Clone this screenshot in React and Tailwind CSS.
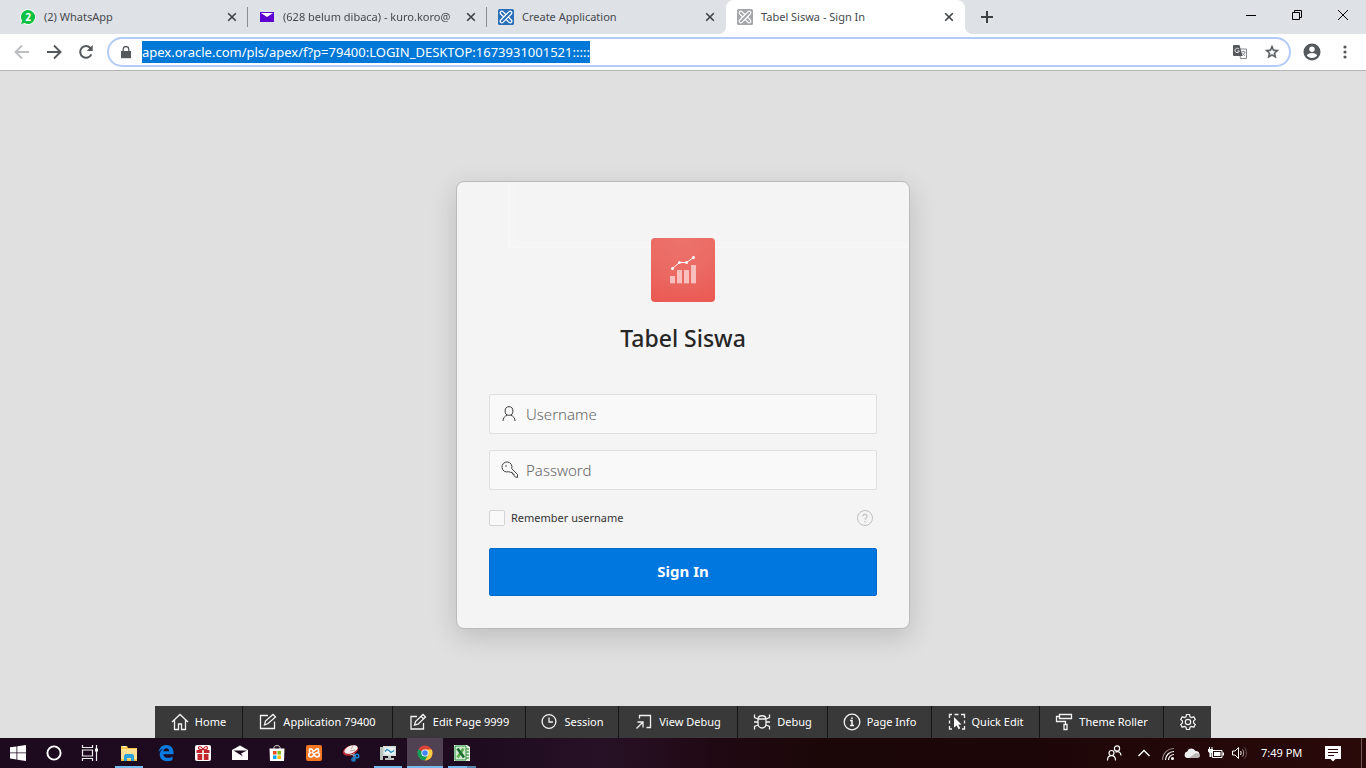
import React from "react";

const CloseIcon = () => (
  <svg width="10" height="10" viewBox="0 0 10 10" stroke="#3c4043" strokeWidth="1.600" aria-hidden="true">
    <path d="M1.200 1.200l7.600 7.600M8.800 1.200L1.200 8.800" />
  </svg>
);

const WhatsAppFavicon = () => (
  <svg width="16" height="16" viewBox="0 0 16 16" aria-hidden="true">
    <circle cx="8" cy="8" r="8" fill="#f4fbf5" />
    <path d="M8 1a7 7 0 1 1-3.4 13.100L1.200 15l.9-3.300A7 7 0 0 1 8 1z" fill="#0dc143" />
    <text x="8" y="11.500" textAnchor="middle" fontSize="10" fontWeight="700" fill="#fff" fontFamily="Open Sans, sans-serif">2</text>
  </svg>
);

const MailFavicon = () => (
  <svg width="16" height="16" viewBox="0 0 16 16" aria-hidden="true">
    <path d="M1 3h14v10H1z" fill="#5f01d1" />
    <path d="M2 4h12L8 8z" fill="#fff" />
  </svg>
);

const ApexFavicon = ({ color }) => (
  <svg width="16" height="16" viewBox="0 0 16 16" aria-hidden="true">
    <rect width="16" height="16" rx="1.500" fill={color} />
    <g transform="rotate(45 8 8)" fill="none" stroke="#fff" strokeWidth="1.200">
      <rect x="6.400" y="0.500" width="3.200" height="15" rx="1.600" />
      <path d="M6.400 6.400H2.100a1.600 1.600 0 0 0 0 3.200h4.300M9.600 6.400h4.300a1.600 1.600 0 0 1 0 3.200H9.600" />
    </g>
  </svg>
);

const tabs = [
  { title: "(2) WhatsApp", icon: <WhatsAppFavicon /> },
  { title: "(628 belum dibaca) - kuro.koro@", icon: <MailFavicon />, faded: true },
  { title: "Create Application", icon: <ApexFavicon color="#2b6fb8" />, last: true },
  { title: "Tabel Siswa - Sign In", icon: <ApexFavicon color="#a4a7aa" />, active: true },
];

function Tab({ title, icon, active, last, faded }) {
  return (
    <div
      className={
        "relative flex h-full w-[239px] min-w-0 items-center pl-[11px] " + (active ? "rounded-t-lg bg-white" : "")
      }
    >
      {icon}
      <button
        type="button"
        className={
          "ml-2 h-5 min-w-0 flex-1 text-left text-[11px] leading-5 whitespace-nowrap text-[#45494d] " +
          (faded ? "[mask-image:linear-gradient(to_right,black_91%,transparent_104%)]" : "")
        }
      >
        {title}
      </button>
      <button type="button" aria-label="Close tab" className="mr-2 flex h-4 w-4 items-center justify-center">
        <CloseIcon />
      </button>
      {!active && !last && <span className="absolute top-[7px] right-0 h-5 w-px bg-[#8a8d91]" />}
      {active && (
        <>
          <span className="absolute bottom-0 -left-2 h-2 w-2 bg-[radial-gradient(circle_at_0_0,#dee1e6_8px,#fff_8px)]" />
          <span className="absolute -right-2 bottom-0 h-2 w-2 bg-[radial-gradient(circle_at_100%_0,#dee1e6_8px,#fff_8px)]" />
        </>
      )}
    </div>
  );
}

function BrowserBar() {
  return (
    <header>
      <div className="flex h-[34px] items-stretch bg-[#dee1e6] pl-[9px]">
        {tabs.map((t) => (
          <Tab key={t.title} {...t} />
        ))}
        <button type="button" aria-label="New tab" className="ml-3 flex w-5 items-center justify-center">
          <svg width="12" height="12" viewBox="0 0 12 12" stroke="#3c4043" strokeWidth="2">
            <path d="M6 0v12M0 6h12" />
          </svg>
        </button>
        <div className="ml-auto flex h-[29px]">
          <button type="button" aria-label="Minimize" className="flex w-[46px] items-center justify-center">
            <svg width="10" height="10" viewBox="0 0 10 10"><path d="M0 5h10v1H0z" /></svg>
          </button>
          <button type="button" aria-label="Restore" className="flex w-[46px] items-center justify-center">
            <svg width="10" height="10" viewBox="0 0 10 10" fill="none" stroke="#000">
              <path d="M.5 2.500h7v7h-7zM2.500 2.500v-2h7v7h-2" />
            </svg>
          </button>
          <button type="button" aria-label="Close" className="flex w-[46px] items-center justify-center">
            <svg width="10" height="10" viewBox="0 0 10 10" fill="none" stroke="#000">
              <path d="M0 0l10 10M10 0L0 10" />
            </svg>
          </button>
        </div>
      </div>

      <div className="flex h-[37px] items-center border-b border-[#b4b4b4] bg-white pl-[14px]">
        <button type="button" aria-label="Back" className="flex w-4 justify-center">
          <svg width="16" height="16" viewBox="0 0 16 16" fill="none" stroke="#bbbdc0" strokeWidth="1.900">
            <path d="M15 8H2M8 1.500L1.500 8 8 14.500" />
          </svg>
        </button>
        <button type="button" aria-label="Forward" className="ml-4 flex w-4 justify-center">
          <svg width="16" height="16" viewBox="0 0 16 16" fill="none" stroke="#55595e" strokeWidth="1.900">
            <path d="M1 8h13M8 1.500L14.500 8 8 14.500" />
          </svg>
        </button>
        <button type="button" aria-label="Reload" className="ml-4 flex w-4 justify-center">
          <svg width="16" height="16" viewBox="0 0 16 16" fill="none" stroke="#55595e" strokeWidth="2">
            <path d="M13.300 10.300A5.800 5.800 0 1 1 12.300 4L13 4.900" />
            <path d="M14.700 1v6H8.700z" fill="#55595e" stroke="none" />
          </svg>
        </button>
        <div className="ml-[13px] flex h-[30px] flex-1 items-center rounded-full border-2 border-[#b3cbf9] pr-[9px] pl-[12px]">
          <svg width="10" height="13" viewBox="0 0 10 13" aria-hidden="true">
            <path d="M0 5h10v7.200H0z" fill="#55595e" />
            <path d="M2.200 5.500V3.300a2.800 2.800 0 0 1 5.600 0v2.200" fill="none" stroke="#55595e" strokeWidth="1.300" />
          </svg>
          <input
            aria-label="Address"
            defaultValue="apex.oracle.com/pls/apex/f?p=79400:LOGIN_DESKTOP:1673931001521:::::"
            className="ml-[11px] h-[22px] bg-[#0078d7] text-[13px] text-white outline-none field-sizing-content"
          />
          <button type="button" aria-label="Translate" className="ml-auto flex w-4 justify-center">
            <svg width="14" height="14" viewBox="0 0 14 14">
              <path d="M6 4h7.500v9.500H7.500z" fill="#fff" stroke="#85888c" />
              <path d="M1 0h5.500L9.500 11H1a1 1 0 0 1-1-1V1a1 1 0 0 1 1-1z" fill="#55595e" />
              <path d="M6 4.200A2.200 2.200 0 1 0 6.300 6H4.300" fill="none" stroke="#e8eaed" />
              <path d="M8.500 6.800h4M10.500 5.800v1M12 7c-.4 1.700-1.500 2.800-2.700 3.500M9.500 8c.5 1.300 1.400 2.200 2.500 2.800" fill="none" stroke="#85888c" strokeWidth=".9" />
            </svg>
          </button>
          <button type="button" aria-label="Bookmark" className="ml-[15px] flex w-[17px] justify-center">
            <svg width="16" height="16" viewBox="0 0 24 24" fill="#55595e">
              <path d="M22 9.240l-7.190-.62L12 2 9.190 8.630 2 9.240l5.460 4.730L5.820 21 12 17.270 18.180 21l-1.630-7.030L22 9.240zM12 15.400l-3.760 2.270 1-4.280-3.320-2.880 4.380-.38L12 6.100l1.710 4.040 4.380.38-3.320 2.880 1 4.280L12 15.400z" stroke="#55595e" strokeWidth=".8" />
            </svg>
          </button>
        </div>
        <button type="button" aria-label="Profile" className="ml-3 flex w-[18px] justify-center">
          <svg width="18" height="18" viewBox="0 0 18 18">
            <circle cx="9" cy="9" r="8.500" fill="#55595e" />
            <circle cx="9" cy="6.300" r="2.700" fill="#fff" />
            <path d="M3.800 12.200c1.200-1.500 3.200-2.200 5.200-2.200s4 .7 5.200 2.200C13 14 11.100 15 9 15s-4-1-5.200-2.800z" fill="#fff" />
          </svg>
        </button>
        <button type="button" aria-label="Menu" className="mr-[13px] ml-4 flex w-4 justify-center">
          <svg width="4" height="14" viewBox="0 0 4 14" fill="#55595e">
            <circle cx="2" cy="2" r="1.600" /><circle cx="2" cy="7" r="1.600" /><circle cx="2" cy="12" r="1.600" />
          </svg>
        </button>
      </div>
    </header>
  );
}

function LoginCard() {
  return (
    <section className="relative w-full max-w-[454px] rounded-lg border border-[#bbb] bg-[#f4f4f4] px-8 pt-14 pb-8 shadow-[0_8px_28px_rgba(0,0,0,0.16)]">
      <span className="pointer-events-none absolute top-0 right-0 left-[51px] h-[66px] border-b-2 border-l-2 border-[#f7f7f7] shadow-[inset_6px_-5px_0_#f5f5f5]" />
      <div className="relative mx-auto flex h-16 w-16 items-center justify-center rounded bg-[radial-gradient(circle_at_50%_0,#ec736c_0%,#eb6a64_50%,#ea5851_100%)]">
        <svg width="32" height="32" viewBox="0 0 32 32" aria-hidden="true">
          <path d="M3 23h5v7H3zM10 17h5v13h-5zM17 17h5v13h-5zM24 12h5v18h-5z" fill="#b33a35" opacity=".45" />
          <path d="M3 22h5v7.500H3zM10 16h5v13.500h-5zM17 16h5v13.500h-5zM24 11h5v18.500h-5z" fill="#f8bfbc" />
          <path d="M5.500 14.500l7-6h7l7-5" fill="none" stroke="#fff" />
          <g fill="#fff">
            <circle cx="5.500" cy="14.500" r="1.500" /><circle cx="12.500" cy="8.500" r="1.500" />
            <circle cx="19.500" cy="8.500" r="1.500" /><circle cx="26.500" cy="3.500" r="1.500" />
          </g>
        </svg>
      </div>
      <h1 className="mt-5 text-center text-[23px] leading-8 font-medium text-[#262626]">Tabel Siswa</h1>
      <form className="mt-10 flex flex-col" onSubmit={(e) => e.preventDefault()}>
        <label className="flex h-10 items-center rounded-xs border border-[#dfdfdf] bg-[#f9f9f9] pl-[11px]">
          <svg width="16" height="16" viewBox="0 0 16 16" fill="none" stroke="#404040" aria-hidden="true">
            <ellipse cx="8" cy="5" rx="3.900" ry="4.300" />
            <path d="M2 15c0-3 1.600-4.800 4.200-5.800M14 15c0-3-1.600-4.800-4.200-5.800" />
          </svg>
          <input aria-label="Username" placeholder="Username" className="ml-[9px] h-full min-w-0 flex-1 text-[15px] font-light outline-none placeholder:text-[#666]" />
        </label>
        <label className="mt-4 flex h-10 items-center rounded-xs border border-[#dfdfdf] bg-[#f9f9f9] pl-[11px]">
          <svg width="17" height="17" viewBox="0 0 17 17" fill="none" stroke="#404040" aria-hidden="true">
            <path d="M10.700 7.600a5 5 0 1 0-3.100 3.100l1.900.6 1.700.2.300 1.600 1.500.1.200 1.600 1.200 1.300 2.100.3v-3z" />
            <circle cx="5" cy="5" r=".8" fill="#404040" stroke="none" />
          </svg>
          <input aria-label="Password" type="password" placeholder="Password" className="ml-2 h-full min-w-0 flex-1 text-[15px] font-light outline-none placeholder:text-[#666]" />
        </label>
        <div className="mt-5 flex h-4 items-center">
          <input id="remember" type="checkbox" className="h-4 w-4 appearance-none rounded-xs border border-[#d4d4d4] bg-[#f9f9f9] checked:bg-[#0076df]" />
          <label htmlFor="remember" className="ml-[6px] text-[11px] leading-4 text-[#333]">Remember username</label>
          <button type="button" aria-label="Help" className="mr-1 ml-auto">
            <svg width="16" height="16" viewBox="0 0 16 16" fill="none" stroke="#bfbfbf">
              <circle cx="8" cy="8" r="7.500" />
              <path d="M5.900 6.300a2.100 2.100 0 1 1 3.300 1.700C8.400 8.500 8 8.800 8 9.800" strokeWidth="1.200" />
              <circle cx="8" cy="11.800" r=".8" fill="#bfbfbf" stroke="none" />
            </svg>
          </button>
        </div>
        <button type="submit" className="mt-[22px] h-12 rounded-xs border border-[#006acb] bg-[#0076df] text-[15px] font-bold text-white">
          Sign In
        </button>
      </form>
    </section>
  );
}

const Ico = ({ children }) => (
  <svg width="18" height="18" viewBox="0 0 18 18" fill="none" stroke="#f2f2f2" strokeWidth="1.300" className="shrink-0" aria-hidden="true">
    {children}
  </svg>
);

const devItems = [
  { label: "Home", cls: "w-[88px]", icon: <Ico><path d="M1 9l8-7.500L17 9M3.500 7v9.500h4V11h3v5.500h4V7" /></Ico> },
  { label: "Application 79400", cls: "w-[150px]", icon: <Ico><path d="M9 2.500H1.500v13h14V8.500M5.500 12l1-4L14 1.500 16.500 4 9 10.500z" /></Ico> },
  { label: "Edit Page 9999", cls: "w-[133px]", icon: <Ico><path d="M8 3.500H2v12.500h12.500V10M5.500 12l1-3.500 7.500-7 2.500 2.500-7.500 7.200zM12 3.300l2.500 2.500" /></Ico> },
  { label: "Session", cls: "w-[93px]", icon: <Ico><circle cx="9" cy="8.500" r="6.900" /><path d="M9 4.500v4.500h4" /></Ico> },
  { label: "View Debug", cls: "w-[119px]", icon: <Ico><path d="M4.500 5.500V2.500h11v12h-4M1.500 15.500l6-6M2.500 9h5.500v5.500" /></Ico> },
  { label: "Debug", cls: "w-[90px]", icon: <Ico><path d="M5 6.500c0-5 8-5 8 0v4c0 6-8 6-8 0zM5 6h8M1.500 1.500v3L5 6M16.500 1.500v3L13 6M1 9h4M13 9h4M5 12l-3.500 1.500v3M13 12l3.500 1.500v3" /></Ico> },
  { label: "Page Info", cls: "w-[104px]", icon: <Ico><circle cx="9" cy="9" r="7.800" /><path d="M7 7.500h2v5M7 12.500h4M9 4.500v1.500" strokeWidth="1.600" /></Ico> },
  { label: "Quick Edit", cls: "w-[108px]", icon: <Ico><path d="M1.500 5V1.500H4M6.500 1.500h4M13 1.500h3.500V5M16.500 7.500v3M16.500 13v3H14M1.500 7.500v3M1.500 13v3H4" /><path d="M6 4l7.500 7.500-3.200.2 2 3.600-1.700.9-1.900-3.700L6 14.500z" fill="#fff" stroke="none" /></Ico> },
  { label: "Theme Roller", cls: "w-[124px]", icon: <Ico><path d="M4.500 1.500h12v4h-12zM4.500 3.500h-3v5h9v2.500M9 11.500h3v5H9z" /></Ico> },
];

function DeveloperToolbar() {
  return (
    <nav className="absolute inset-x-0 bottom-0 flex h-8 justify-center text-[11px] text-white">
      {devItems.map((d) => (
        <button key={d.label} type="button" className={"flex items-center justify-center gap-[6px] border-r border-[#151515] bg-[#393939] whitespace-nowrap " + d.cls}>
          {d.icon}
          {d.label}
        </button>
      ))}
      <button type="button" aria-label="Settings" className="flex w-[47px] items-center justify-center bg-[#393939]">
        <svg width="18" height="18" viewBox="0 0 24 24" fill="none" stroke="#f2f2f2" strokeWidth="1.600">
          <path d="M10 2h4l.7 3 2 1.100 3-1 2 3.500-2.300 2.100v2.600l2.300 2.100-2 3.500-3-1-2 1.100L14 22h-4l-.7-3-2-1.100-3 1-2-3.500 2.300-2.100v-2.600L2.300 8.600l2-3.500 3 1 2-1.100z" />
          <circle cx="12" cy="12" r="3.600" />
        </svg>
      </button>
    </nav>
  );
}

const S = ({ children, w = 18, h = 18 }) => (
  <svg width={w} height={h} viewBox={"0 0 " + w + " " + h} fill="none" aria-hidden="true">{children}</svg>
);

const systemApps = [
  { name: "Start", icon: <S w={16} h={16}><path d="M0 2.300l6.500-.9v6H0zM7.300 1.200L16 0v7.400H7.300zM0 8.300h6.500v6.200L0 13.600zM7.300 8.300H16V16l-8.700-1.200z" fill="#fff" /></S> },
  { name: "Cortana", icon: <S><circle cx="9" cy="9" r="6.600" stroke="#fff" strokeWidth="1.900" /></S> },
  { name: "Task View", icon: <S><path d="M1.500 1v2.500h10V1M1.500 17v-2.500h10V17M1.500 6h10v6h-10zM15.500 1v16" stroke="#eee" strokeWidth="1.200" /><path d="M14 4.500h3v3h-3z" fill="#fff" /></S> },
];

const apps = [
  { name: "File Explorer", line: "mx-1 bg-[#76b9ed]", icon: <S><path d="M1 2h6l1 2h9v13H1z" fill="#f9c84a" /><path d="M1 5h16v10H1z" fill="#ffe293" /><path d="M4 17v-5.500L5.500 10h7l1.500 1.500V17h-3v-3H7v3z" fill="#2aa2dc" /><path d="M3 2.500h3" stroke="#fff" /></S> },
  { name: "Edge", icon: <S><path d="M1.500 8.500C2 4 5 1 9.300 1c4.500 0 7.200 3.200 7.200 7.200v2H6.300c.2 2.500 2.300 3.600 4.700 3.600 1.800 0 3.200-.5 4.500-1.300v3.500c-1.500.8-3.200 1.200-5.200 1.200-4.500 0-7.600-2.500-7.600-6.700 0-2.700 1.400-4.800 3.600-5.800-2.200.3-3.800 1.700-4.800 3.800zM6.400 7.200h5.700c0-1.700-.9-2.900-2.700-2.900-1.600 0-2.700 1.200-3 2.900z" fill="#0a7be0" /></S> },
  { name: "Gifts", icon: <S><rect x="1" y="1" width="16" height="16" rx="2" fill="#fff" /><path d="M2.500 6h5.700v3H2.500zM9.800 6h5.700v3H9.800zM3.500 10h4.700v6H3.500zM9.800 10h4.700v6H9.800z" fill="#c3252c" /><path d="M9 5.500C7 1.500 4.500 2 4.500 4S7 5.500 9 5.500zm0 0c2-4 4.500-3.500 4.500-1.500S11 5.500 9 5.500z" stroke="#c3252c" strokeWidth="1.200" /></S> },
  { name: "Mail", icon: <S><path d="M1 6l8-4.500L17 6v10H1z" fill="#fff" /><path d="M2.500 6.500h13.500L10 9.500l2 3z" fill="#1d0b1e" /></S> },
  { name: "Store", icon: <S><path d="M6 5V3.500C6 1 12 1 12 3.500V5" stroke="#ddd" /><path d="M1.500 4.500h15L16 17H2z" fill="#fff" /><path d="M5 7h3.500v3.500H5z" fill="#f25022" /><path d="M9.500 7H13v3.500H9.500z" fill="#7fba00" /><path d="M5 11.500h3.500V15H5z" fill="#00a4ef" /><path d="M9.500 11.500H13V15H9.500z" fill="#ffb900" /></S> },
  { name: "XAMPP", icon: <S><rect x="1" y="1" width="16" height="16" rx="2" fill="#f37622" /><path d="M4 5h2.500L9 7.500M14 5h-2.500L6.500 9M6 9c-3 0-3 4 0 4 2.500 0 3.500-4.500 6-4.500 3.500 0 3 4.500 0 4.500-2 0-3-2-4-4M4.500 5v3.500M13.500 5v3" stroke="#fff" strokeWidth="1.600" /></S> },
  { name: "Snipping Tool", icon: <S><ellipse cx="8.500" cy="6.500" rx="8" ry="4.800" fill="#b72a33" transform="rotate(-22 8.500 6.500)" /><ellipse cx="9" cy="5.500" rx="7" ry="3.700" fill="#f4eeee" transform="rotate(-22 9 5.500)" /><path d="M9 5l2-3M8 7l5-1" stroke="#a88" strokeWidth=".7" /><path d="M8 10l6 2M12 9v7" stroke="#bbb" /><circle cx="15" cy="12" r="1.800" stroke="#1686d9" strokeWidth="1.500" /><circle cx="11.500" cy="15.500" r="1.600" stroke="#1686d9" strokeWidth="1.500" /></S> },
  { name: "System Monitor", line: "mx-1 bg-[#76b9ed]", icon: <S><path d="M1 3h3v13H1z" fill="#b8c4bd" /><path d="M4 2h13v10H4z" fill="#d6dad8" /><path d="M5.500 3.500h10v7h-10z" fill="#e9f6fb" /><path d="M6 7.500l2-2 2 1 2 2 3-2" stroke="#2585c4" strokeWidth="1.200" /><path d="M9 12h3v2h3v2H6v-2h3z" fill="#bfc6c2" /></S> },
  { name: "Chrome", active: true, line: "bg-[#76b9ed]", icon: <S><circle cx="9" cy="9" r="7.500" fill="#db4437" /><path d="M9 9L2.500 5.250A7.500 7.500 0 0 0 9 16.500l3.250-5.600z" fill="#0f9d58" /><path d="M9 5.600h6.700A7.500 7.500 0 0 1 9 16.500l3.100-5.600z" fill="#ffcd40" /><circle cx="9" cy="9" r="3.600" fill="#fff" /><circle cx="9" cy="9" r="2.800" fill="#4285f4" /></S> },
  { name: "Excel", line: "mx-1 bg-[linear-gradient(to_right,#76b9ed_68%,#5487ae_68%)]", icon: <S><path d="M1 1h13l3 2v14H1z" fill="#e9f4e9" /><path d="M13 4h3v2h-3zM13 7h3v2h-3zM13 10h3v2h-3zM13 13h3v2h-3z" fill="#79b77d" /><path d="M2 2h11v14H2z" fill="#d5ead3" stroke="#2f9446" /><path d="M10.500 4.500l-6 9" stroke="#5cae4e" strokeWidth="2.600" /><path d="M4.500 4.500l6.500 9" stroke="#1f6f34" strokeWidth="2.800" /></S> },
];

function Taskbar() {
  return (
    <footer className="flex h-[30px] bg-[linear-gradient(to_right,#1e0a1f_0%,#1e0b20_35%,#271126_44%,#210914_52%,#1b0708_60%,#1d0608_75%,#2a0909_100%)] text-white">
      {systemApps.map((a) => (
        <button key={a.name} type="button" aria-label={a.name} className="flex w-9 items-center justify-center">{a.icon}</button>
      ))}
      <div className="ml-[3px] flex gap-px">
        {apps.map((a) => (
          <button key={a.name} type="button" aria-label={a.name} className={"flex w-9 flex-col " + (a.active ? "bg-[#514253]" : "")}>
            <span className="flex h-7 w-full items-center justify-center pt-0.5">{a.icon}</span>
            <span className={"h-0.5 self-stretch " + (a.line || "")} />
          </button>
        ))}
      </div>
      <div className="ml-auto flex items-center">
        <button type="button" aria-label="People" className="flex w-9 justify-center">
          <S w={16} h={16}><circle cx="5.500" cy="8" r="2.500" stroke="#fff" strokeWidth="1.200" /><path d="M1.500 15.500c0-3 1.800-4.800 4-4.800s4 1.800 4 4.800" stroke="#fff" strokeWidth="1.200" /><circle cx="11" cy="3.500" r="2.600" stroke="#fff" strokeWidth="1.200" /><path d="M9.500 7.200c2.500-1.700 5.500.3 5.500 3.300" stroke="#fff" strokeWidth="1.200" /></S>
        </button>
        <button type="button" aria-label="Show hidden icons" className="flex w-6 justify-center">
          <S w={12} h={8}><path d="M.5 7L6 1.500 11.500 7" stroke="#fff" strokeWidth="1.400" /></S>
        </button>
        <button type="button" aria-label="Wi-Fi" className="flex w-6 justify-center">
          <S w={14} h={13}><path d="M1.500 13A11.500 11.500 0 0 1 13 1.500" stroke="#8d7f82" strokeWidth="1.200" /><path d="M4.500 13A8.500 8.500 0 0 1 13 4.500M7.500 13A5.500 5.500 0 0 1 13 7.500" stroke="#fff" strokeWidth="1.200" /><circle cx="11.500" cy="11.500" r="1.500" fill="#fff" /></S>
        </button>
        <button type="button" aria-label="OneDrive" className="flex w-6 justify-center">
          <S w={16} h={10}><path d="M3.500 10a3.300 3.300 0 0 1-.3-6.500A4.500 4.500 0 0 1 11.500 3a3.600 3.600 0 0 1 1.500 7z" fill="#eee" /><path d="M5 10l6-4.500c3-1 5 .5 5 2.300S14.500 10 13 10z" fill="#bbb4b5" /></S>
        </button>
        <button type="button" aria-label="Battery" className="flex w-6 justify-center">
          <S w={16} h={12}><path d="M4.500 3.500h9.500v7H4.500z" stroke="#fff" /><path d="M6 5h6.500v4H6zM14.500 5.500H16v3h-1.500z" fill="#fff" /><path d="M0 2h5v2.500L3.500 6v4h-2V6L0 4.500zM1 0h1v2H1zM3.500 0h1v2h-1z" fill="#fff" /></S>
        </button>
        <button type="button" aria-label="Volume" className="flex w-6 justify-center">
          <S w={16} h={14}><path d="M.5 5h2.500l3.500-3.500v11L3 9H.500z" stroke="#fff" /><path d="M8.500 5c.8 1.200.8 2.800 0 4" stroke="#fff" /><path d="M10.500 3.500c1.600 2 1.600 5 0 7" stroke="#ae9fa0" /><path d="M12.500 1.500c2.600 3 2.600 8 0 11" stroke="#6d5556" /></S>
        </button>
        <span className="ml-[9px] w-[42px] text-[11px] whitespace-nowrap">7:49 PM</span>
        <button type="button" aria-label="Notifications" className="ml-[21px] flex w-[18px] justify-center pt-0.5">
          <S w={16} h={16}><path d="M0 0h16v13h-5.500L8 15.500 5.500 13H0z" fill="#fff" /><path d="M3 3.500h10M3 6.500h10M3 9.500h6" stroke="#280809" /></S>
        </button>
        <span className="mr-1 ml-[19px] h-[30px] w-px bg-[#6e5a5a]" />
      </div>
    </footer>
  );
}

export default function App() {
  return (
    <div className="flex min-h-screen flex-col bg-[#e0e0e0] font-['Noto_Sans','Open_Sans',sans-serif]">
      <BrowserBar />
      <main className="relative flex flex-1 items-center justify-center">
        <LoginCard />
        <DeveloperToolbar />
      </main>
      <Taskbar />
    </div>
  );
}
